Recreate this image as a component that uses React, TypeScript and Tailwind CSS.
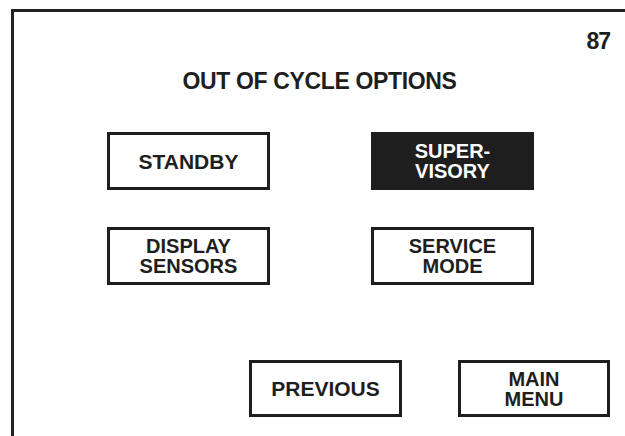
import React from 'react';

type Option = {
  lines: string[];
  active?: boolean;
};

const gridOptions: Option[] = [
  { lines: ['STANDBY'] },
  { lines: ['SUPER-', 'VISORY'], active: true },
  { lines: ['DISPLAY', 'SENSORS'] },
  { lines: ['SERVICE', 'MODE'] },
];

const OptionButton: React.FC<{ option: Option; className?: string }> = ({ option, className = '' }) => (
  <button
    className={
      'flex flex-col items-center justify-center border-[3px] border-[#1e1e1e] font-bold ' +
      (option.lines.length > 1 ? 'text-[20px] leading-[20px] ' : 'text-[21px] leading-none ') +
      (option.active ? 'bg-[#1e1e1e] text-white ' : 'bg-white text-[#1e1e1e] ') +
      className
    }
  >
    {option.lines.map(line => (
      <span key={line}>{line}</span>
    ))}
  </button>
);

export default function App() {
  return (
    <div className="h-[436px] w-[625px] overflow-hidden bg-white font-['Liberation_Sans',Arial,sans-serif] text-[#1e1e1e]">
      <div className="ml-[11px] mt-[9px] flex h-[427px] flex-col border-l-[3px] border-t-[3px] border-[#222]">
        {/* screen number */}
        <div className="flex justify-end pr-[15px] pt-[18px]">
          <span className="text-[23px] font-bold leading-none tracking-[-1px]">87</span>
        </div>

        {/* title */}
        <h1 className="mt-[17px] text-center text-[23px] font-bold leading-none tracking-[-0.35px]">
          OUT OF CYCLE OPTIONS
        </h1>

        {/* option grid */}
        <div className="mt-[39px] grid grid-cols-[163px_163px] gap-x-[101px] gap-y-[37px] pl-[93px]">
          {gridOptions.map(option => (
            <OptionButton key={option.lines.join('')} option={option} className="h-[58px]" />
          ))}
        </div>

        {/* navigation */}
        <div className="mt-[75px] flex gap-[56px] pl-[235px]">
          <OptionButton option={{ lines: ['PREVIOUS'] }} className="h-[57px] w-[153px]" />
          <OptionButton option={{ lines: ['MAIN', 'MENU'] }} className="h-[57px] w-[152px]" />
        </div>
      </div>
    </div>
  );
}
